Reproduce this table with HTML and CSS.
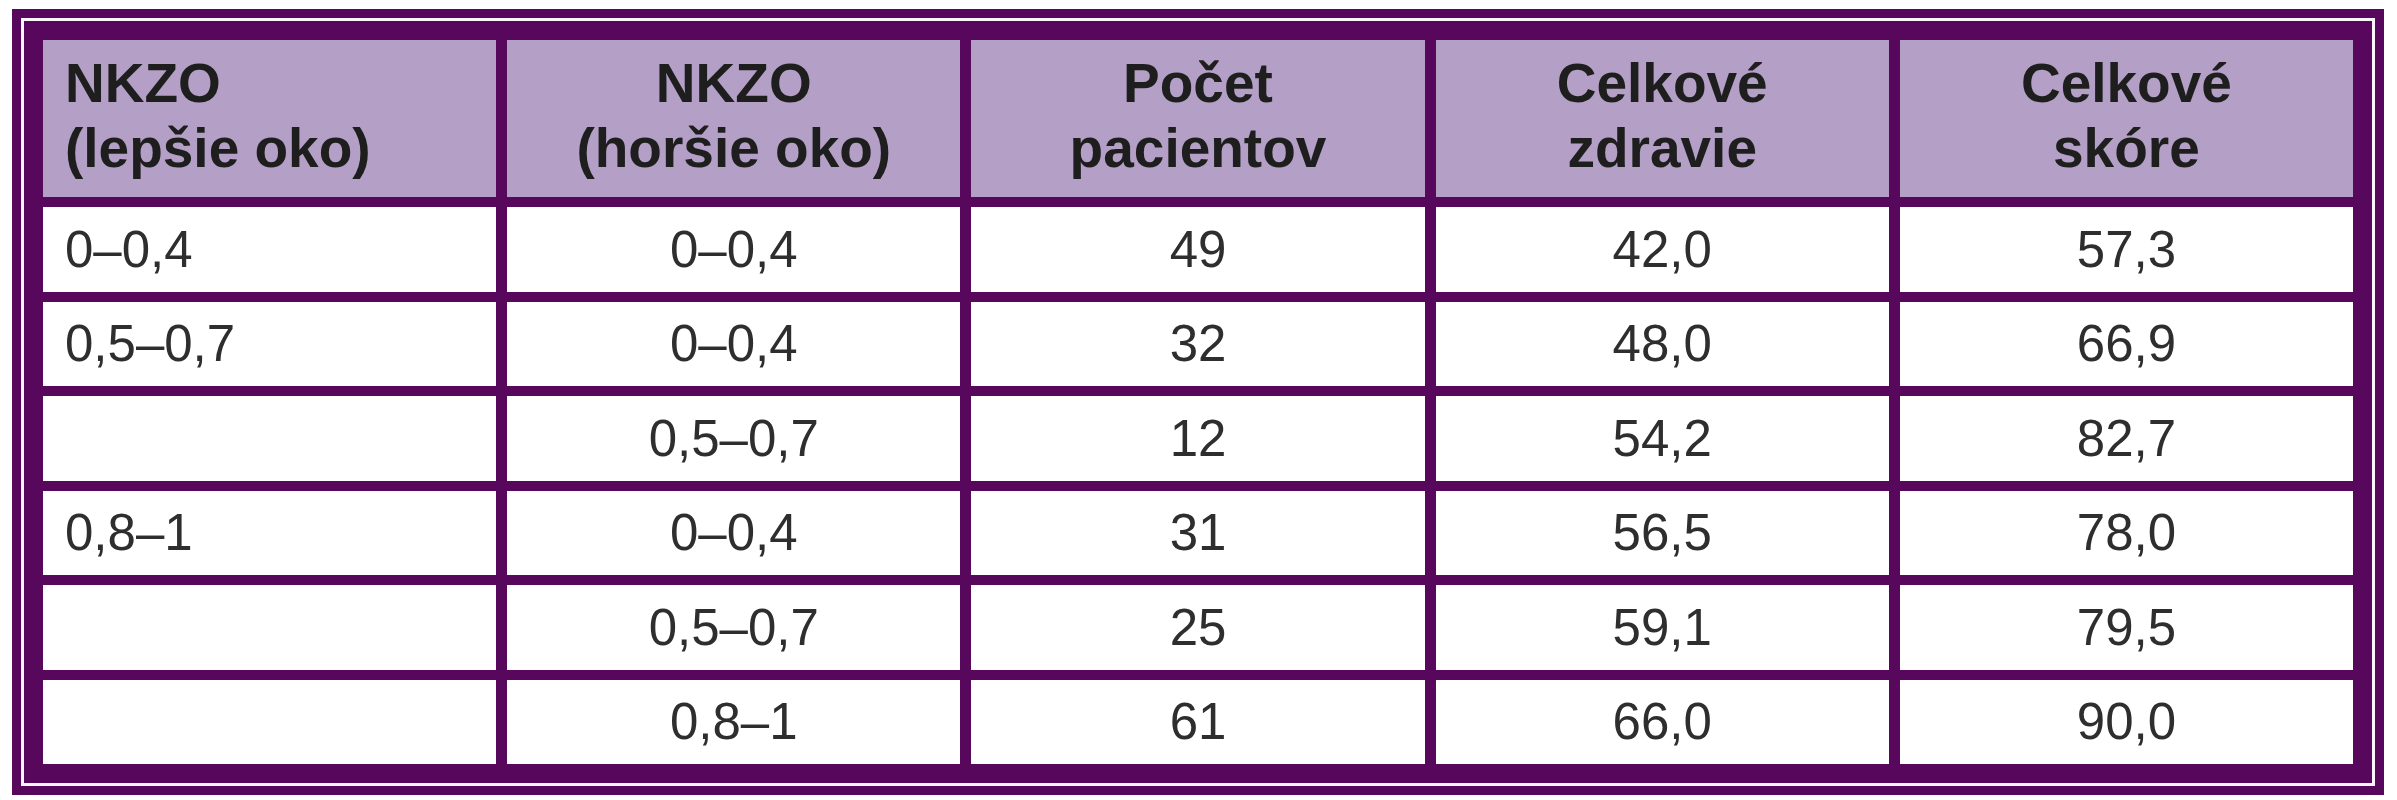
FILE: index.html
```html
<!DOCTYPE html>
<html lang="sk">
<head>
<meta charset="utf-8">
<title>Tabuľka</title>
<link rel="stylesheet" href="styles.css">
</head>
<body>
<div class="frame">
  <div class="inner">
    <div class="grid">
      <div class="cell head first">NKZO<br>(lepšie oko)</div>
      <div class="cell head">NKZO<br>(horšie oko)</div>
      <div class="cell head">Počet<br>pacientov</div>
      <div class="cell head">Celkové<br>zdravie</div>
      <div class="cell head">Celkové<br>skóre</div>

      <div class="cell first">0–0,4</div>
      <div class="cell">0–0,4</div>
      <div class="cell">49</div>
      <div class="cell">42,0</div>
      <div class="cell">57,3</div>

      <div class="cell first">0,5–0,7</div>
      <div class="cell">0–0,4</div>
      <div class="cell">32</div>
      <div class="cell">48,0</div>
      <div class="cell">66,9</div>

      <div class="cell first"></div>
      <div class="cell">0,5–0,7</div>
      <div class="cell">12</div>
      <div class="cell">54,2</div>
      <div class="cell">82,7</div>

      <div class="cell first">0,8–1</div>
      <div class="cell">0–0,4</div>
      <div class="cell">31</div>
      <div class="cell">56,5</div>
      <div class="cell">78,0</div>

      <div class="cell first"></div>
      <div class="cell">0,5–0,7</div>
      <div class="cell">25</div>
      <div class="cell">59,1</div>
      <div class="cell">79,5</div>

      <div class="cell first"></div>
      <div class="cell">0,8–1</div>
      <div class="cell">61</div>
      <div class="cell">66,0</div>
      <div class="cell">90,0</div>
    </div>
  </div>
</div>
</body>
</html>
```

FILE: styles.css
```css
html, body {
  margin: 0;
  padding: 0;
  background: #ffffff;
}

body {
  font-family: "Liberation Sans", Arial, sans-serif;
}

.frame {
  margin: 9px 13px 0 12px;
  border: 9px solid #58085c;
  padding: 3px;
  background: #fbf6fb;
}

.inner {
  background: #58085c;
  padding: 19px;
}

.grid {
  display: grid;
  grid-template-columns: repeat(5, 1fr);
  grid-template-rows: 157px repeat(6, 84.5px);
  gap: 10px 11px;
}

.cell {
  background: #ffffff;
  color: #2e2e2e;
  font-size: 51px;
  line-height: 1;
  display: flex;
  align-items: center;
  justify-content: center;
  text-align: center;
}

.cell.first {
  justify-content: flex-start;
  text-align: left;
  padding-left: 22px;
}

.head {
  background: #b4a0c6;
  color: #1e1e1e;
  font-size: 55px;
  font-weight: bold;
  line-height: 65px;
  padding-bottom: 6px;
}
```
